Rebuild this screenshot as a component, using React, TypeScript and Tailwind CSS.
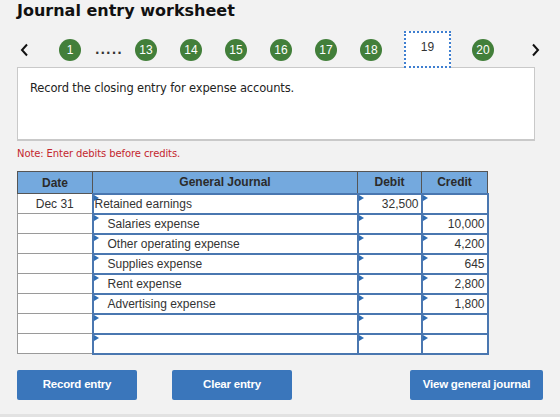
import * as React from "react";

const steps = ["13", "14", "15", "16", "17", "18"];

type Row = {
  date?: string;
  account?: string;
  indent?: boolean;
  debit?: string;
  credit?: string;
};

const rows: Row[] = [
  { date: "Dec 31", account: "Retained earnings", debit: "32,500" },
  { account: "Salaries expense", indent: true, credit: "10,000" },
  { account: "Other operating expense", indent: true, credit: "4,200" },
  { account: "Supplies expense", indent: true, credit: "645" },
  { account: "Rent expense", indent: true, credit: "2,800" },
  { account: "Advertising expense", indent: true, credit: "1,800" },
  {},
  {},
];

function Circle({ n, className = "" }: { n: string; className?: string }) {
  return (
    <div
      className={`flex h-[22px] w-[22px] shrink-0 items-center justify-center rounded-full bg-[#427f3a] text-[12px] text-white ${className}`}
    >
      {n}
    </div>
  );
}

// little blue flag in the corner of an input cell
function Marker() {
  return (
    <span className="absolute left-0 top-0 h-0 w-0 border-y-[3px] border-l-[5px] border-y-transparent border-l-[#2e6db4]" />
  );
}

function Chevron({ dir }: { dir: "left" | "right" }) {
  return (
    <svg width="9" height="14" viewBox="0 0 9 14" className="shrink-0">
      <polyline
        points={dir === "left" ? "7,1.5 2,7 7,12.5" : "2,1.5 7,7 2,12.5"}
        fill="none"
        stroke="#111"
        strokeWidth="2"
      />
    </svg>
  );
}

export default function App() {
  return (
    <div className="h-[417px] w-[560px] overflow-hidden border-b-[3px] border-[#e2e2e2] bg-[#f2f2f2] pl-[17px] font-['Liberation_Sans',Arial,sans-serif] text-[#333]">
      <h1 className="h-[22px] pt-[1px] font-['DejaVu_Sans',Verdana,sans-serif] text-[16px] leading-[20px] font-bold text-[#111]">
        Journal entry worksheet
      </h1>

      {/* step navigation */}
      <div className="mt-[9px] flex h-[37px] items-center pl-[3px]">
        <Chevron dir="left" />
        <Circle n="1" className="ml-[30px]" />
        <span className="ml-[14px] w-[27px] text-center font-['DejaVu_Sans',sans-serif] text-[12px] leading-none font-bold tracking-[1px] text-[#333]">
          .....
        </span>
        {steps.map((s, i) => (
          <Circle key={s} n={s} className={i === 0 ? "ml-[13px]" : "ml-[23px]"} />
        ))}
        <div className="relative z-10 ml-[22px] flex h-[37px] w-[47px] items-center justify-center border-2 border-dotted border-[#3f7fd0] bg-white pb-[6px] text-[12px] text-[#333]">
          19
        </div>
        <Circle n="20" className="ml-[21px]" />
        <div className="ml-[37px]">
          <Chevron dir="right" />
        </div>
      </div>

      <div className="-mt-[1px] h-[74px] w-[518px] border border-[#c9c9c9] border-b-2 bg-white px-[12px] pt-[12px] font-['DejaVu_Sans',Verdana,sans-serif] text-[11.5px] leading-[16px] tracking-[-0.15px] text-[#222]">
        Record the closing entry for expense accounts.
      </div>

      <p className="mt-[6px] font-['DejaVu_Sans',Verdana,sans-serif] text-[10px] leading-[14px] tracking-[-0.1px] text-[#c4262e]">
        Note: Enter debits before credits.
      </p>

      <table className="mt-[10px] w-[470px] table-fixed border-collapse text-[12px]">
        <colgroup>
          <col className="w-[75px]" />
          <col className="w-[265px]" />
          <col className="w-[64px]" />
          <col className="w-[66px]" />
        </colgroup>
        <thead>
          <tr className="h-[22px] bg-[#74a9de] text-[#2b2b2b]">
            <th className="border border-[#555] font-bold">Date</th>
            <th className="border border-[#555] font-semibold">General Journal</th>
            <th className="border border-[#555] font-semibold">Debit</th>
            <th className="border border-[#555] font-semibold">Credit</th>
          </tr>
        </thead>
        <tbody>
          {rows.map((r, i) => (
            <tr key={i} className="h-[20px] leading-[16px]">
              <td className="border border-[#9a9a9a] bg-white text-center">{r.date}</td>
              <td className={`relative border-2 border-[#4a77b0] bg-white ${r.indent ? "pl-[14px]" : "pl-[1px]"}`}>
                <Marker />
                {r.account}
              </td>
              <td className="relative border-2 border-[#4a77b0] bg-white pr-[2px] text-right">
                <Marker />
                {r.debit}
              </td>
              <td className="relative border-2 border-[#4a77b0] bg-white pr-[2px] text-right">
                <Marker />
                {r.credit}
              </td>
            </tr>
          ))}
        </tbody>
      </table>

      <div className="mt-[15px] flex w-[526px] items-center text-[11.5px] font-bold tracking-[-0.2px] text-white">
        <button className="h-[30px] w-[120px] rounded-[2px] bg-[#3a76bb]">Record entry</button>
        <button className="ml-[35px] h-[30px] w-[120px] rounded-[2px] bg-[#3a76bb]">Clear entry</button>
        <button className="ml-auto h-[30px] w-[133px] rounded-[2px] bg-[#3a76bb]">View general journal</button>
      </div>
    </div>
  );
}
